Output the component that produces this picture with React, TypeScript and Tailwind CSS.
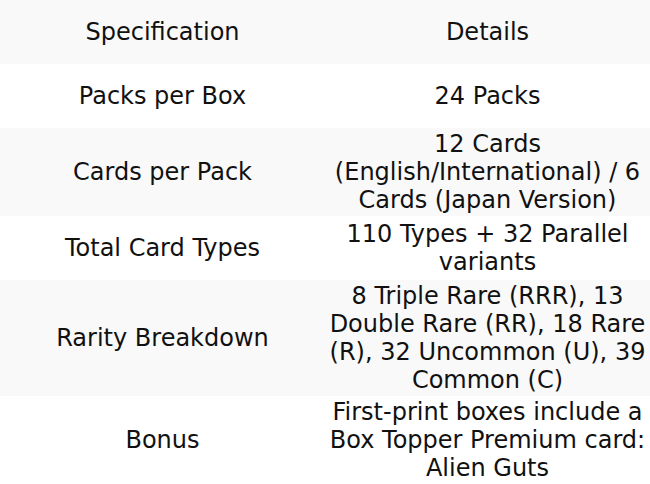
const rows: [string, string][] = [
    ["Packs per Box", "24 Packs"],
    ["Cards per Pack", "12 Cards (English/International) / 6 Cards (Japan Version)"],
    ["Total Card Types", "110 Types + 32 Parallel variants"],
    [
        "Rarity Breakdown",
        "8 Triple Rare (RRR), 13 Double Rare (RR), 18 Rare (R), 32 Uncommon (U), 39 Common (C)",
    ],
    ["Bonus", "First-print boxes include a Box Topper Premium card: Alien Guts"],
];

export default function App() {
    return (
        <div className="w-[650px] bg-white font-['DejaVu_Sans',sans-serif] text-[24px] leading-[28px] text-[#111]">
            <table className="w-full table-fixed border-collapse">
                <thead>
                    <tr className="h-16 bg-[#f9f9f9]">
                        <th className="p-0.5 text-center font-normal">Specification</th>
                        <th className="p-0.5 text-center font-normal">Details</th>
                    </tr>
                </thead>
                <tbody>
                    {rows.map(([spec, details], i) => (
                        <tr key={spec} className={i % 2 === 1 ? "h-16 bg-[#f9f9f9]" : "h-16 bg-white"}>
                            <td className="p-0.5 text-center align-middle">{spec}</td>
                            <td className="p-0.5 text-center align-middle">{details}</td>
                        </tr>
                    ))}
                </tbody>
            </table>
        </div>
    );
}
